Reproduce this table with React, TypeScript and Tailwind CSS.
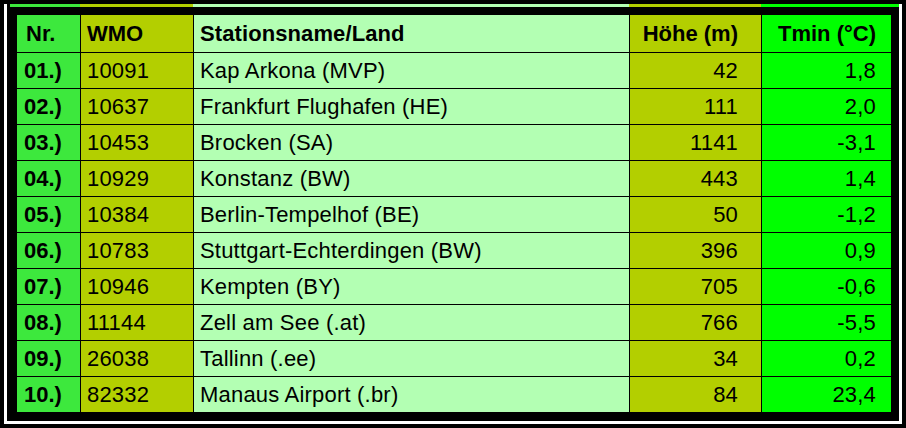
const rows = [
  ["01.)", "10091", "Kap Arkona (MVP)", "42", "1,8"],
  ["02.)", "10637", "Frankfurt Flughafen (HE)", "111", "2,0"],
  ["03.)", "10453", "Brocken (SA)", "1141", "-3,1"],
  ["04.)", "10929", "Konstanz (BW)", "443", "1,4"],
  ["05.)", "10384", "Berlin-Tempelhof (BE)", "50", "-1,2"],
  ["06.)", "10783", "Stuttgart-Echterdingen (BW)", "396", "0,9"],
  ["07.)", "10946", "Kempten (BY)", "705", "-0,6"],
  ["08.)", "11144", "Zell am See (.at)", "766", "-5,5"],
  ["09.)", "26038", "Tallinn (.ee)", "34", "0,2"],
  ["10.)", "82332", "Manaus Airport (.br)", "84", "23,4"],
];

export default function App() {
  return (
    <div className="w-[906px] h-[428px] bg-black pt-[4px] px-[4px] pb-[4px] font-['Liberation_Sans',Arial,sans-serif] text-[22px] text-black">
      <div className="flex flex-col border-x-[3px] border-b-[3px] border-white">
        {/* coloured top strip */}
        <div className="flex h-[3px] ml-[3px]">
          <div className="w-[70px] bg-[#3de83d]" />
          <div className="w-[113px] bg-[#b3cf00]" />
          <div className="w-[436px] bg-[#b3ffb3]" />
          <div className="w-[132px] bg-[#b3cf00]" />
          <div className="flex-1 bg-[#00ff00]" />
        </div>
        <div className="bg-black pl-[10px] pr-[8px] pt-[8px] pb-[9px]">
          <div className="grid grid-cols-[63px_112px_435px_131px_129px] grid-rows-[37px_repeat(10,35px)] gap-px bg-black">
            <div className="bg-[#3de83d] flex items-center pl-[9px] font-bold">Nr.</div>
            <div className="bg-[#b3cf00] flex items-center pl-[6px] font-bold">WMO</div>
            <div className="bg-[#b3ffb3] flex items-center pl-[6px] font-bold tracking-[0.1px]">Stationsname/Land</div>
            <div className="bg-[#b3cf00] flex items-center justify-end pr-[23px] font-bold">Höhe (m)</div>
            <div className="bg-[#00ff00] flex items-center justify-end pr-[15px] font-bold">Tmin (°C)</div>
            {rows.map((r) => (
              <>
                <div key={r[0] + "a"} className="bg-[#3de83d] flex items-center pl-[7px] font-bold">{r[0]}</div>
                <div key={r[0] + "b"} className="bg-[#b3cf00] flex items-center pl-[6px] tracking-[0.2px]">{r[1]}</div>
                <div key={r[0] + "c"} className="bg-[#b3ffb3] flex items-center pl-[6px] tracking-[0.2px]">{r[2]}</div>
                <div key={r[0] + "d"} className="bg-[#b3cf00] flex items-center justify-end pr-[23px] tracking-[0.2px]">{r[3]}</div>
                <div key={r[0] + "e"} className="bg-[#00ff00] flex items-center justify-end pr-[15px] tracking-[0.2px]">{r[4]}</div>
              </>
            ))}
          </div>
        </div>
      </div>
    </div>
  );
}
